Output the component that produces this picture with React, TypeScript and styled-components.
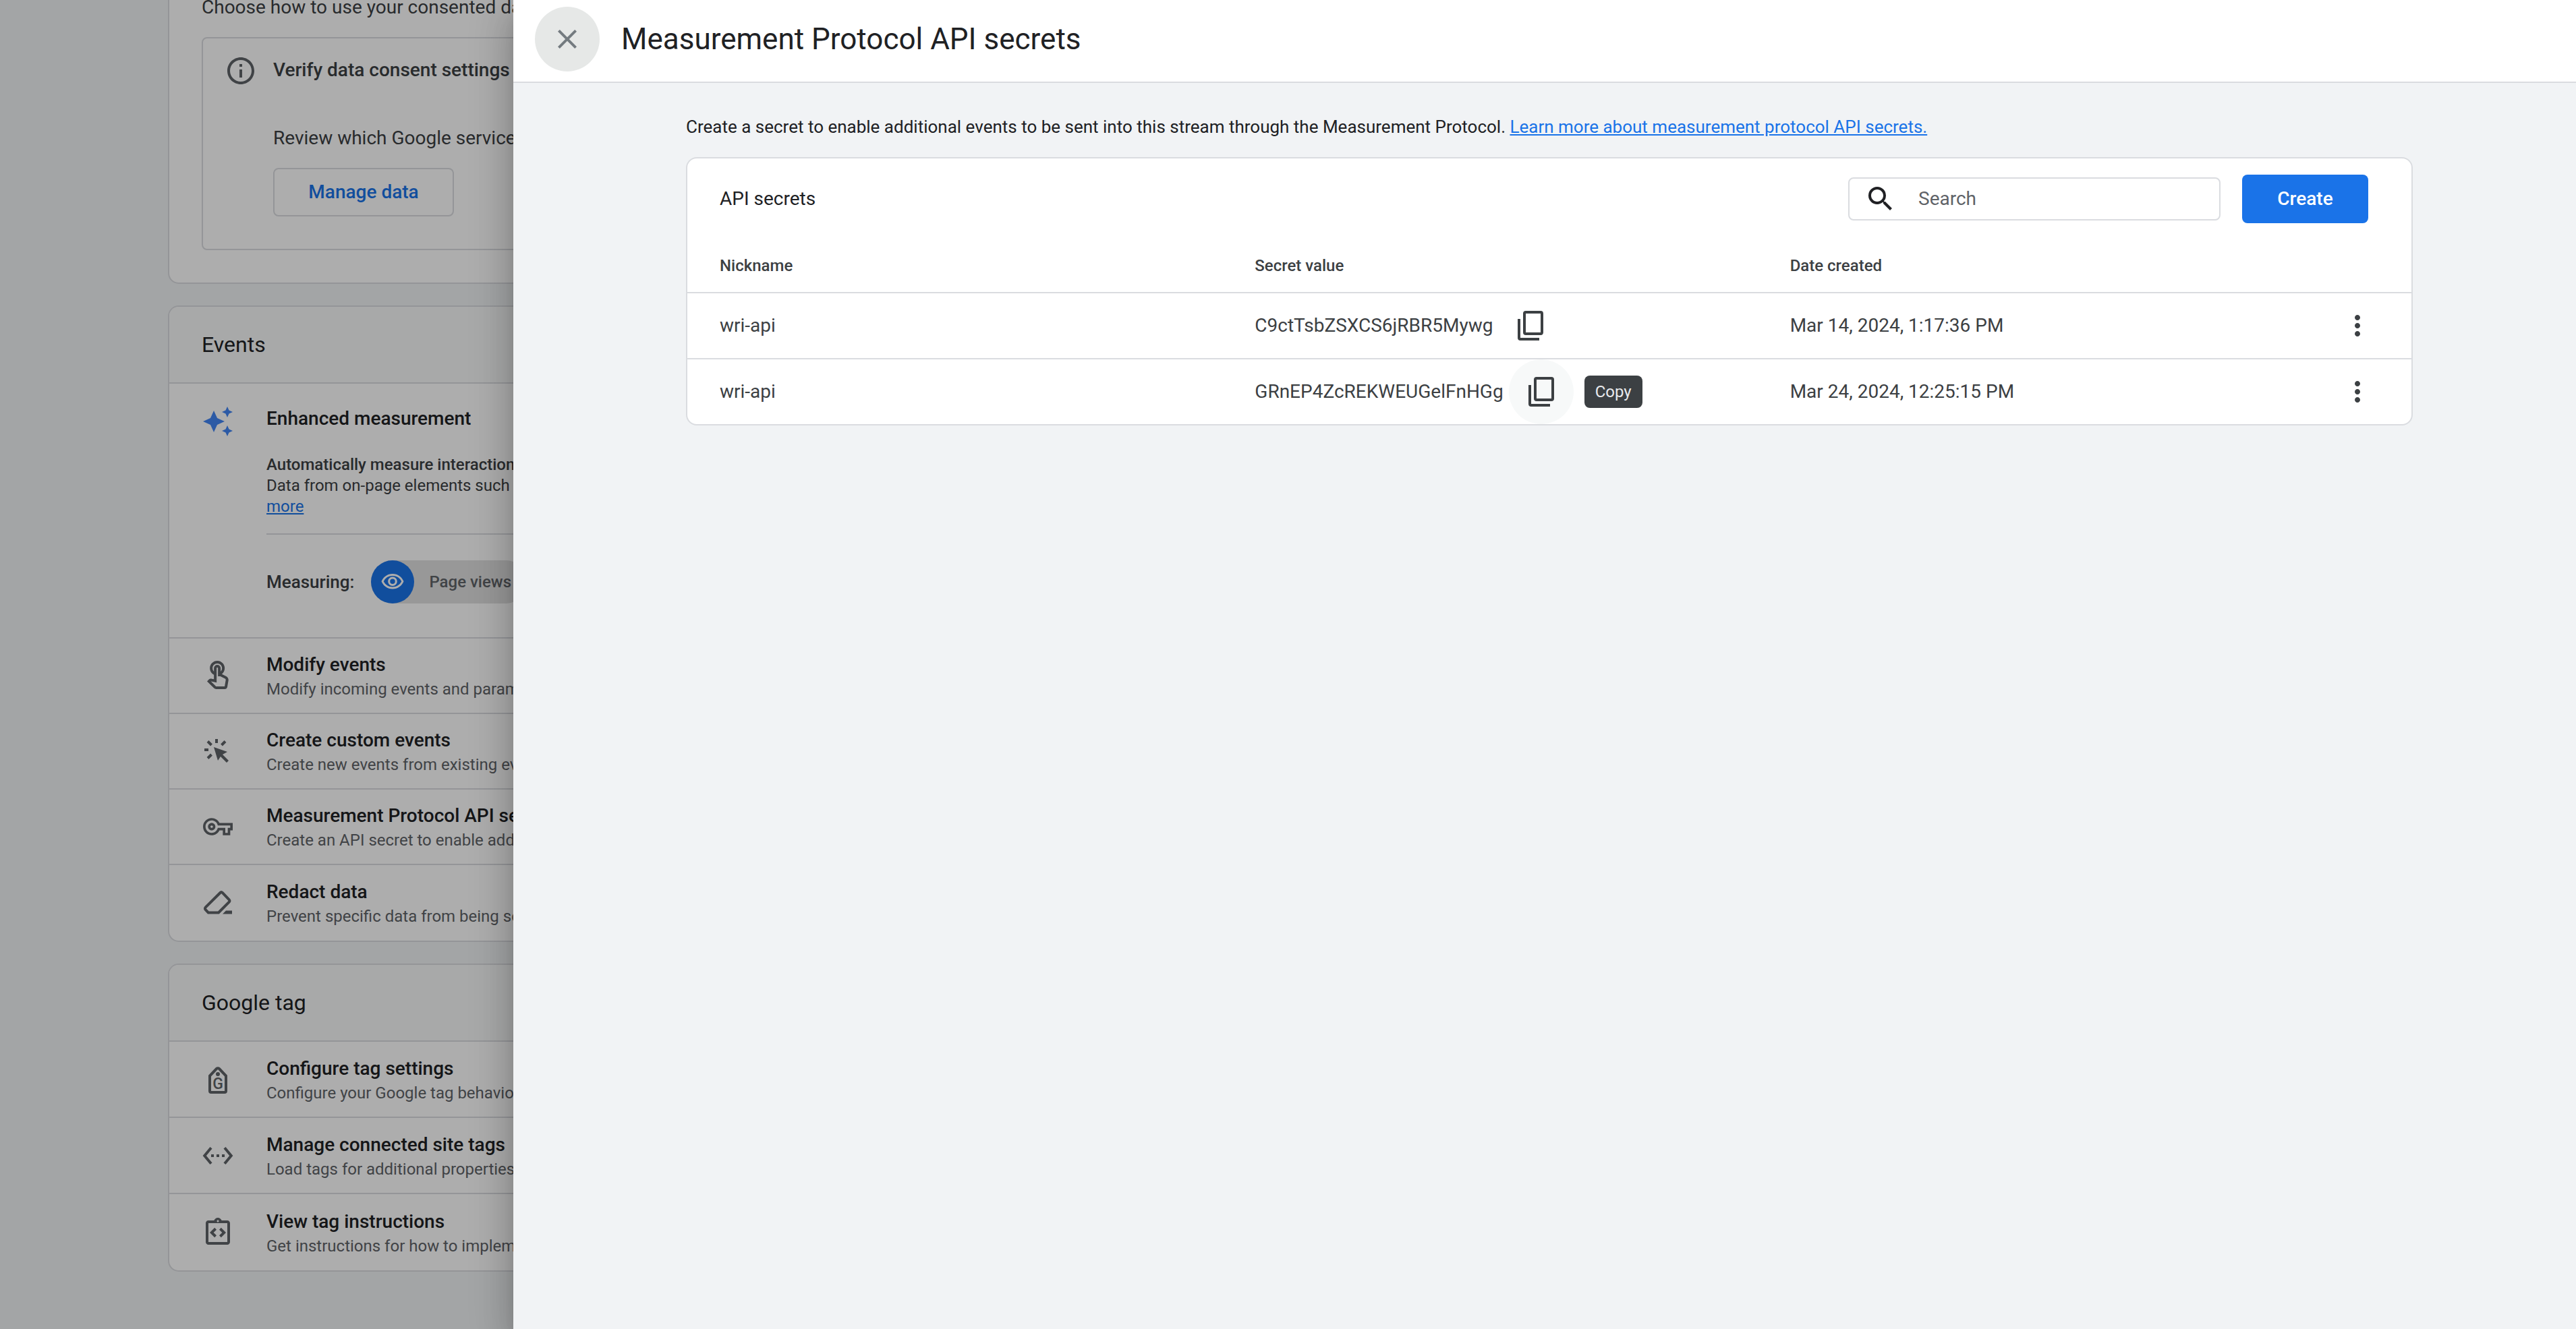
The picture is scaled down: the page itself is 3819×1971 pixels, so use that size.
import React from "react";
import styled, { createGlobalStyle } from "styled-components";
import {
  MdAutoAwesome,
  MdClose,
  MdMoreVert,
  MdOutlineInfo,
  MdOutlineIntegrationInstructions,
  MdOutlineTouchApp,
  MdOutlineVisibility,
  MdOutlineVpnKey,
  MdSearch,
  MdSettingsEthernet,
} from "react-icons/md";

const color = {
  ink: "#202124",
  body: "#3c4043",
  muted: "#5f6368",
  line: "#dadce0",
  page: "#f1f3f5",
  header: "#f8f9fa",
  blue: "#1a73e8",
};

const GlobalStyle = createGlobalStyle`
  *, *::before, *::after { box-sizing: border-box; }
  body {
    margin: 0;
    background: ${color.page};
    color: ${color.ink};
    font-family: Roboto, "Liberation Sans", sans-serif;
    font-size: 28px;
    line-height: 32px;
  }
  button, input { font: inherit; color: inherit; }
  h1, h2, h3, p { margin: 0; font: inherit; }
  svg { display: block; flex: none; }
`;

const Shell = styled.div`
  position: relative;
  min-height: 100vh;
  overflow: hidden;
`;

/* Stream details page, scrolled down behind the panel */
const StreamPage = styled.main`
  display: flex;
  flex-direction: column;
  gap: 32px;
  height: 100vh;
  margin-top: -55px;
  padding: 0 249px;
`;

const Card = styled.section`
  flex: none;
  border: 2px solid ${color.line};
  border-radius: 16px;
  background: #fff;
  overflow: hidden;
`;

const ConsentCard = styled(Card)`
  display: flex;
  flex-direction: column;
  gap: 28px;
  padding: 48px;
  color: ${color.body};
`;

const ConsentBox = styled.div`
  display: flex;
  gap: 24px;
  padding: 24px 32px 48px;
  border: 2px solid ${color.line};
  border-radius: 8px;
`;

const ConsentText = styled.div`
  display: flex;
  flex-direction: column;
  align-items: flex-start;
  padding-top: 7px;
`;

const ConsentTitle = styled.h3`
  font-weight: 500;
  margin-bottom: 69px;
`;

const OutlineButton = styled.button`
  min-width: 268px;
  height: 72px;
  margin-top: 28px;
  padding: 0 48px;
  border: 2px solid ${color.line};
  border-radius: 8px;
  background: transparent;
  color: ${color.blue};
  font-weight: 500;
`;

const CardHeader = styled.h2`
  display: flex;
  align-items: center;
  height: 114px;
  padding: 0 48px;
  border-bottom: 2px solid ${color.line};
  background: ${color.header};
  font-size: 32px;
  line-height: 40px;
`;

const Enhanced = styled.div`
  display: flex;
  gap: 48px;
  padding: 32px 48px 50px;
  border-bottom: 2px solid ${color.line};
  color: #4285f4;
`;

const EnhancedBody = styled.div`
  flex: 1;
  padding-top: 4px;
  color: ${color.body};
`;

const ItemTitle = styled.h3`
  color: ${color.ink};
  font-weight: 500;
`;

const EnhancedText = styled.p`
  margin-top: 37px;
  padding-bottom: 24px;
  border-bottom: 2px solid ${color.line};
  font-size: 24px;
  line-height: 31px;

  strong { font-weight: 500; }
`;

const Link = styled.a`
  color: ${color.blue};
  text-decoration: underline;
`;

const Measuring = styled.div`
  display: flex;
  align-items: center;
  gap: 25px;
  margin-top: 38px;
  font-size: 26px;
  font-weight: 500;
`;

const Chip = styled.span`
  display: inline-flex;
  align-items: center;
  gap: 22px;
  height: 64px;
  padding-right: 24px;
  border-radius: 32px;
  background: #e0e0e0;
  color: ${color.muted};
  font-size: 24px;
`;

const ChipIcon = styled.span`
  display: grid;
  place-items: center;
  width: 64px;
  height: 64px;
  border-radius: 50%;
  background: ${color.blue};
  color: #fff;
`;

const Item = styled.div<{ $height: number }>`
  display: flex;
  align-items: center;
  gap: 48px;
  height: ${(p) => p.$height}px;
  padding: 0 48px;
  color: ${color.muted};

  &:not(:last-child) { border-bottom: 2px solid ${color.line}; }
`;

const ItemIcon = styled.span`
  display: grid;
  place-items: center;
  width: 48px;
  height: 48px;
`;

const ItemText = styled.div`
  display: flex;
  flex-direction: column;
  gap: 6px;
  padding-top: 2px;
`;

const ItemNote = styled.p`
  font-size: 24px;
  line-height: 28px;
`;

const Scrim = styled.div`
  position: absolute;
  inset: 0;
  background: rgba(0, 0, 0, 0.32);
`;

/* Slide-in panel that lies over the page */
const Panel = styled.aside`
  position: absolute;
  inset: 0 0 0 761px;
  background: ${color.page};
  box-shadow:
    0 16px 20px -10px rgba(0, 0, 0, 0.2),
    0 32px 48px 4px rgba(0, 0, 0, 0.14),
    0 12px 60px 10px rgba(0, 0, 0, 0.12);
`;

const PanelHeader = styled.header`
  display: flex;
  align-items: center;
  gap: 32px;
  height: 123px;
  padding: 0 32px 5px;
  border-bottom: 2px solid ${color.line};
  background: #fff;
`;

const PanelTitle = styled.h1`
  font-size: 44px;
  line-height: 56px;
`;

const RoundButton = styled.button<{ $fill?: string }>`
  display: grid;
  flex: none;
  place-items: center;
  width: 96px;
  height: 96px;
  padding: 0;
  border: 0;
  border-radius: 50%;
  background: ${(p) => p.$fill ?? "transparent"};
`;

const CloseButton = styled(RoundButton)`
  color: #747b80;
`;

const PanelBody = styled.div`
  padding: 49px 242px 48px 256px;
`;

const Intro = styled.p`
  margin-bottom: 29px;
  font-size: 26px;
`;

const Toolbar = styled.div`
  display: flex;
  align-items: center;
  gap: 32px;
  height: 120px;
  padding: 0 64px 0 48px;
`;

const ToolbarTitle = styled.h2`
  flex: 1;
`;

const SearchBox = styled.label`
  display: flex;
  align-items: center;
  gap: 32px;
  width: 552px;
  height: 64px;
  padding: 0 22px;
  border: 2px solid ${color.line};
  border-radius: 8px;
`;

const SearchInput = styled.input`
  flex: 1;
  min-width: 0;
  padding: 0;
  border: 0;
  outline: 0;
  background: transparent;

  &::placeholder { color: ${color.muted}; opacity: 1; }
`;

const CreateButton = styled.button`
  min-width: 187px;
  height: 72px;
  padding: 0 48px;
  border: 0;
  border-radius: 8px;
  background: ${color.blue};
  color: #fff;
  font-weight: 500;
`;

const Table = styled.table`
  width: 100%;
  border-collapse: separate;
  border-spacing: 0;
  table-layout: fixed;
  color: ${color.body};
`;

const HeadCell = styled.th<{ $width?: number }>`
  width: ${(p) => (p.$width ? `${p.$width}px` : "auto")};
  height: 80px;
  padding: 0 0 0 48px;
  border-bottom: 2px solid ${color.line};
  font-size: 24px;
  font-weight: 500;
  text-align: left;
`;

const Cell = styled.td`
  height: 96px;
  padding: 0 0 0 48px;

  tr:not(:last-child) > & {
    height: 98px;
    border-bottom: 2px solid ${color.line};
  }
`;

const SecretValue = styled.div`
  display: flex;
  align-items: center;
  gap: 8px;
`;

const CopyAnchor = styled.span`
  position: relative;
  display: flex;
`;

const Tooltip = styled.span`
  position: absolute;
  top: 24px;
  left: 112px;
  padding: 8px 16px;
  border-radius: 8px;
  background: ${color.body};
  color: #e8eaed;
  font-size: 24px;
`;

const CopyIcon = () => (
  <svg width="38" height="44" viewBox="0 0 38 44" fill="none" stroke="currentColor" strokeWidth="4">
    <rect x="10" y="2" width="26" height="32" rx="2" />
    <path d="M2 12V40a2 2 0 0 0 2 2H32" />
  </svg>
);

const ClickIcon = () => (
  <svg width="48" height="48" viewBox="0 0 48 48" fill="currentColor">
    <path
      d="M4 22h6M22 6v6M9 9.500l5.500 5.500M35 9.500l-5.500 5.500M14.500 29L9 34.500"
      fill="none"
      stroke="currentColor"
      strokeWidth="4"
    />
    <path d="M18 18l20 7-7 4 9 9-3 3-9-9-4 6z" />
  </svg>
);

const EraserIcon = () => (
  <svg width="48" height="48" viewBox="0 0 48 48" fill="currentColor">
    <path
      d="M28 8.500L5.700 30.700a2.500 2.500 0 0 0 0 3.500L9.800 38.500H25L40.500 23a3 3 0 0 0 0-4L30.500 8.700a1.800 1.800 0 0 0-2.500-.2z"
      fill="none"
      stroke="currentColor"
      strokeWidth="4"
    />
    <path d="M31 40.500l5-5h9v5z" />
  </svg>
);

const TagIcon = () => (
  <svg width="48" height="48" viewBox="0 0 48 48" fill="currentColor">
    <path
      d="M12 18.500V41a2 2 0 0 0 2 2H34a2 2 0 0 0 2-2V18.500L26 8a2.800 2.800 0 0 0-4 0z"
      fill="none"
      stroke="currentColor"
      strokeWidth="4"
    />
    <circle cx="24" cy="16" r="3" />
    <text x="24" y="38" fontSize="23" fontWeight="500" textAnchor="middle">G</text>
  </svg>
);

type Entry = { icon: React.ReactNode; title: string; note: string };

const eventItems: Entry[] = [
  { icon: <MdOutlineTouchApp size={48} />, title: "Modify events", note: "Modify incoming events and parameters" },
  { icon: <ClickIcon />, title: "Create custom events", note: "Create new events from existing events" },
  { icon: <MdOutlineVpnKey size={44} />, title: "Measurement Protocol API secrets", note: "Create an API secret to enable additional events" },
  { icon: <EraserIcon />, title: "Redact data", note: "Prevent specific data from being sent" },
];

const tagItems: Entry[] = [
  { icon: <TagIcon />, title: "Configure tag settings", note: "Configure your Google tag behavior" },
  { icon: <MdSettingsEthernet size={48} />, title: "Manage connected site tags", note: "Load tags for additional properties" },
  { icon: <MdOutlineIntegrationInstructions size={48} />, title: "View tag instructions", note: "Get instructions for how to implement" },
];

const secrets = [
  { name: "wri-api", value: "C9ctTsbZSXCS6jRBR5Mywg", date: "Mar 14, 2024, 1:17:36 PM", hovered: false },
  { name: "wri-api", value: "GRnEP4ZcREKWEUGelFnHGg", date: "Mar 24, 2024, 12:25:15 PM", hovered: true },
];

const ItemList = ({ items, height }: { items: Entry[]; height: number }) => (
  <>
    {items.map((item) => (
      <Item key={item.title} $height={height}>
        <ItemIcon>{item.icon}</ItemIcon>
        <ItemText>
          <ItemTitle>{item.title}</ItemTitle>
          <ItemNote>{item.note}</ItemNote>
        </ItemText>
      </Item>
    ))}
  </>
);

export default function App() {
  return (
    <Shell>
      <GlobalStyle />
      <StreamPage>
        <ConsentCard>
          <p>Choose how to use your consented data</p>
          <ConsentBox>
            <MdOutlineInfo size={48} color={color.muted} />
            <ConsentText>
              <ConsentTitle>Verify data consent settings</ConsentTitle>
              <p>Review which Google services</p>
              <OutlineButton type="button">Manage data</OutlineButton>
            </ConsentText>
          </ConsentBox>
        </ConsentCard>

        <Card>
          <CardHeader>Events</CardHeader>
          <Enhanced>
            <MdAutoAwesome size={48} />
            <EnhancedBody>
              <ItemTitle>Enhanced measurement</ItemTitle>
              <EnhancedText>
                <strong>Automatically measure interactions</strong>
                <br />
                Data from on-page elements such
                <br />
                <Link href="#enhanced">more</Link>
              </EnhancedText>
              <Measuring>
                Measuring:
                <Chip>
                  <ChipIcon>
                    <MdOutlineVisibility size={36} />
                  </ChipIcon>
                  Page views
                </Chip>
              </Measuring>
            </EnhancedBody>
          </Enhanced>
          <ItemList items={eventItems} height={112} />
        </Card>

        <Card>
          <CardHeader>Google tag</CardHeader>
          <ItemList items={tagItems} height={113} />
        </Card>
      </StreamPage>

      <Scrim />

      <Panel>
        <PanelHeader>
          <CloseButton type="button" aria-label="Close" $fill="#e6e8e7">
            <MdClose size={48} />
          </CloseButton>
          <PanelTitle>Measurement Protocol API secrets</PanelTitle>
        </PanelHeader>
        <PanelBody>
          <Intro>
            Create a secret to enable additional events to be sent into this stream through the Measurement Protocol.{" "}
            <Link href="#secrets">Learn more about measurement protocol API secrets.</Link>
          </Intro>
          <Card>
            <Toolbar>
              <ToolbarTitle>API secrets</ToolbarTitle>
              <SearchBox>
                <MdSearch size={48} />
                <SearchInput type="search" placeholder="Search" aria-label="Search" />
              </SearchBox>
              <CreateButton type="button">Create</CreateButton>
            </Toolbar>
            <Table>
              <thead>
                <tr>
                  <HeadCell>Nickname</HeadCell>
                  <HeadCell>Secret value</HeadCell>
                  <HeadCell>Date created</HeadCell>
                  <HeadCell $width={176} aria-label="Actions" />
                </tr>
              </thead>
              <tbody>
                {secrets.map((s) => (
                  <tr key={s.value}>
                    <Cell>{s.name}</Cell>
                    <Cell>
                      <SecretValue>
                        {s.value}
                        <CopyAnchor>
                          <RoundButton type="button" aria-label="Copy" $fill={s.hovered ? "#f7f9f9" : undefined}>
                            <CopyIcon />
                          </RoundButton>
                          {s.hovered && <Tooltip role="tooltip">Copy</Tooltip>}
                        </CopyAnchor>
                      </SecretValue>
                    </Cell>
                    <Cell>{s.date}</Cell>
                    <Cell>
                      <RoundButton type="button" aria-label="More options">
                        <MdMoreVert size={48} />
                      </RoundButton>
                    </Cell>
                  </tr>
                ))}
              </tbody>
            </Table>
          </Card>
        </PanelBody>
      </Panel>
    </Shell>
  );
}
